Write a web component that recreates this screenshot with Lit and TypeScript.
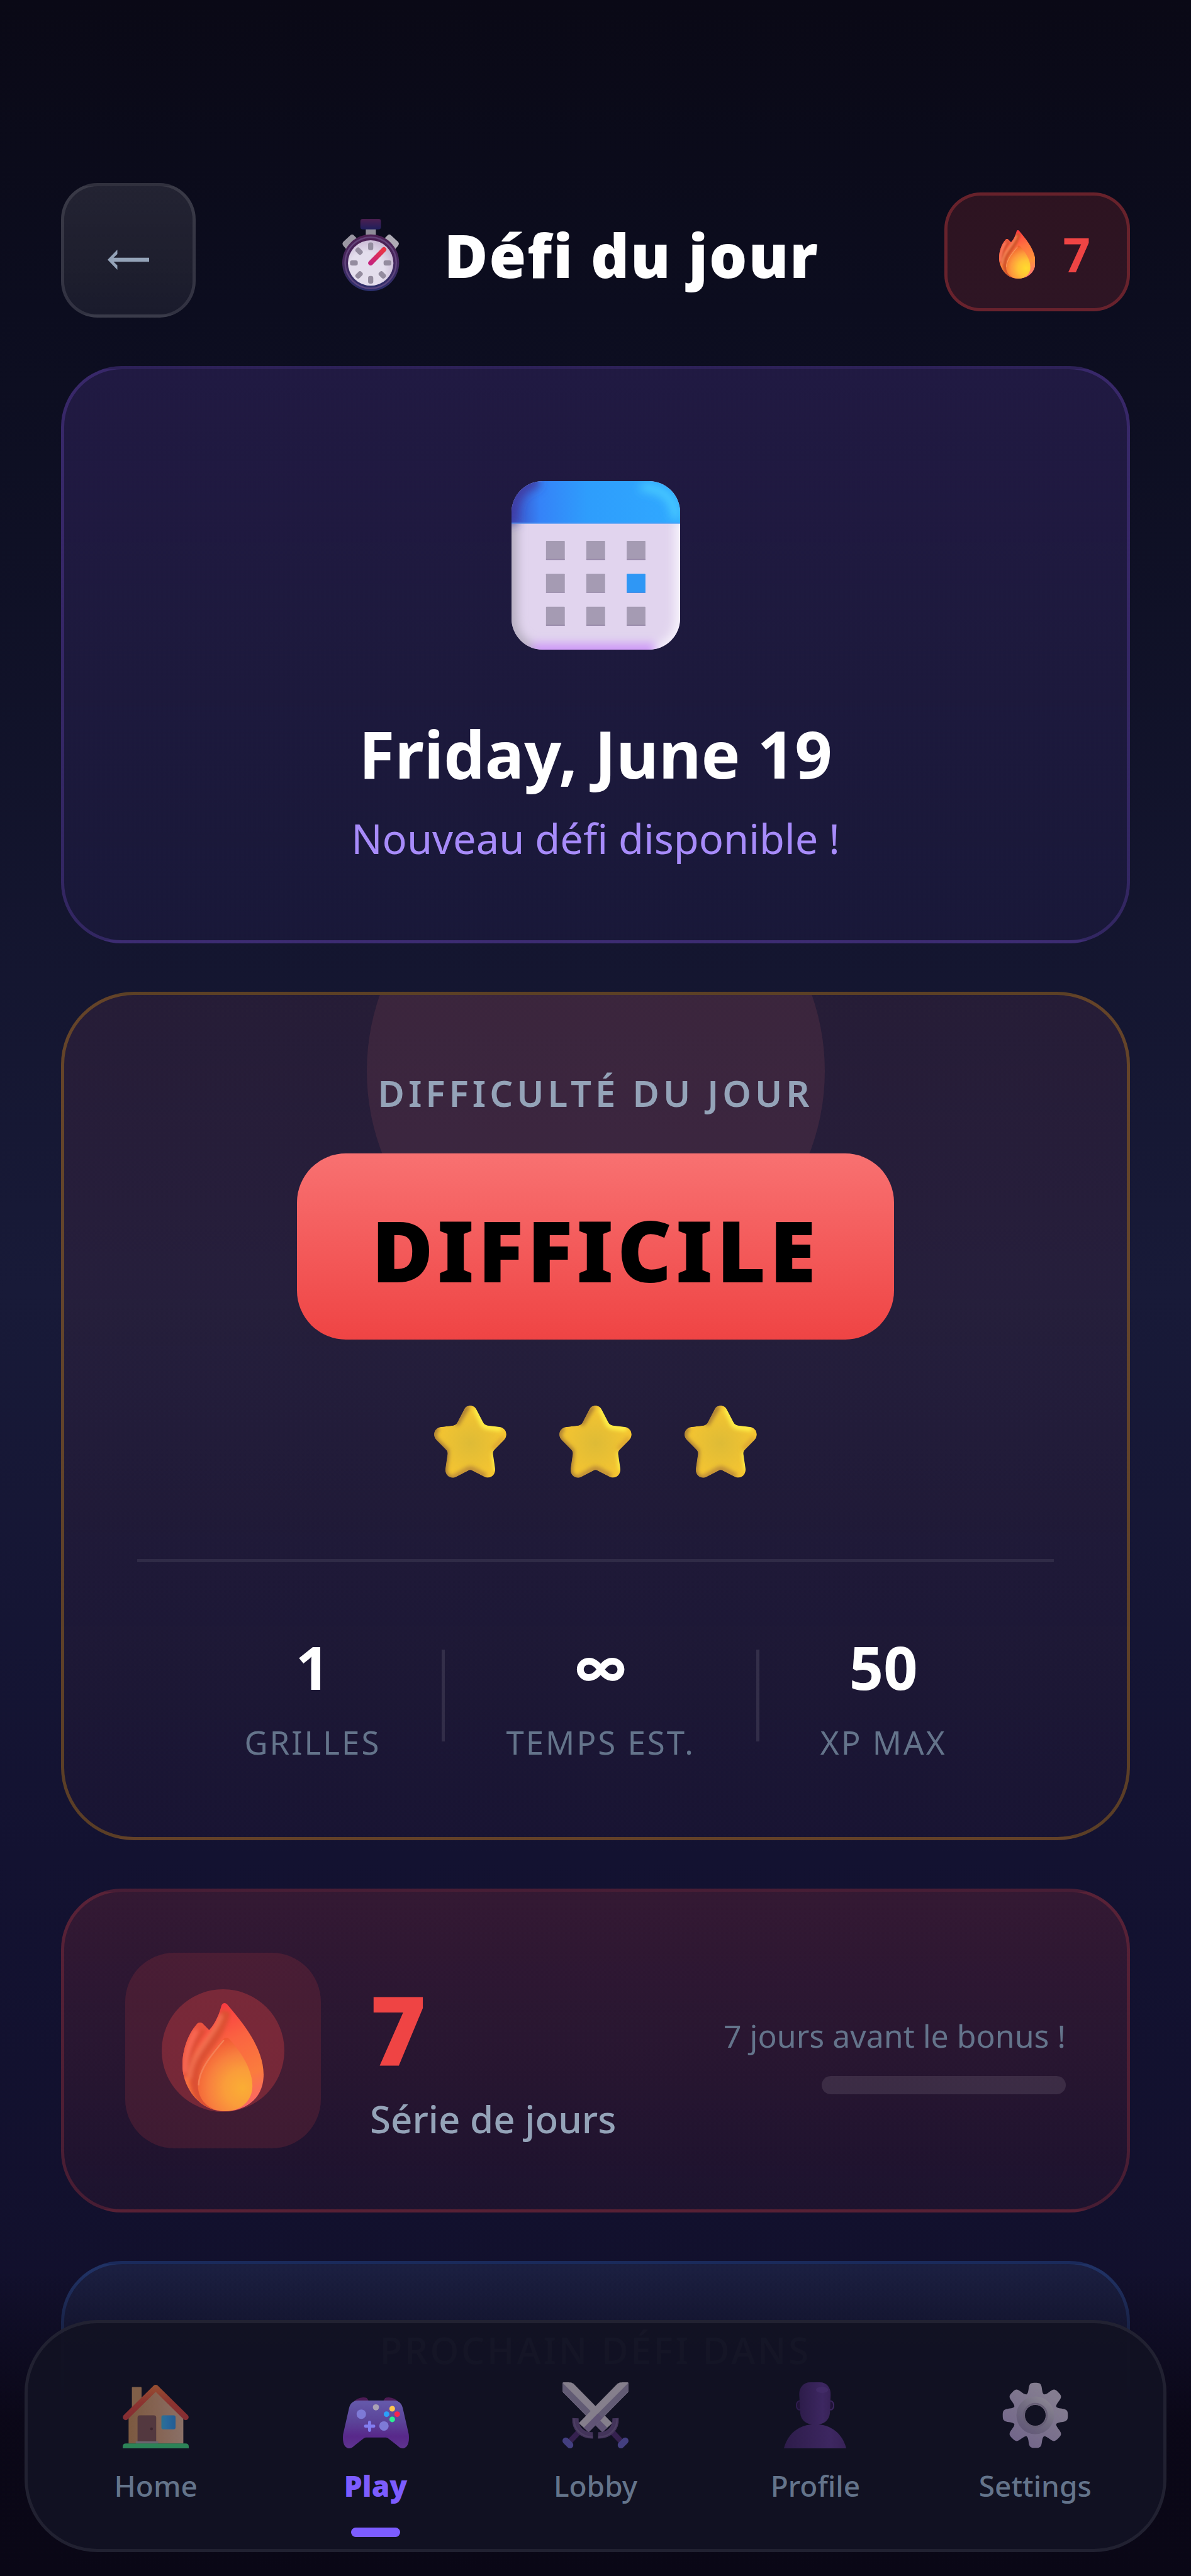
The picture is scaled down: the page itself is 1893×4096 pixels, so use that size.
import { LitElement, html, css, svg } from 'lit';
import { customElement, property, state } from 'lit/decorators.js';
import { classMap } from 'lit/directives/class-map.js';

const starPath =
  'M11.6 1.6C12.4-.5 15.6-.5 16.4 1.6L18.9 6.4C19.3 7.2 19.9 7.6 20.7 7.7L25.4 8.3C28 8.7 28.8 11.6 27 13.4L23.5 16.9C22.9 17.5 22.7 18 22.8 18.9L23.6 24.4C23.9 27 21.6 28.7 19.4 27.5L14.9 25.2C14.3 24.8 13.7 24.8 13.1 25.2L8.6 27.5C6.4 28.7 4.1 27 4.4 24.4L5.2 18.9C5.3 18 5.1 17.5 4.5 16.9L1 13.4C-.8 11.6 0 8.7 2.6 8.3L7.3 7.7C8.1 7.6 8.7 7.2 9.1 6.4Z';

const flamePath =
  'M10.1.6C10.5-.2 11.2-.2 11.8.6C15.5 5 21 11.500 21 18.500C21 25 16 28 10.900 28C4.500 28 0 22 0 16C0 12 1.500 8 3.600 5.600C4.200 4.900 4.900 4.900 5.400 5.500L6.900 7C8.600 5.200 9.600 2.600 10.100.6Z';

const blade = svg`
  <path d="M24.2.1C25 0 27 0 27.600 0Q28 0 28 .5V3.700L27.700 4.300L11.100 21.100L6.900 17.300L23.300.6Z" fill="#857f8c" />
  <path d="M28 .2V3.700L27.600 4.400L11.100 21.100L9 19.300Z" fill="#625b74" />
  <path d="M17 15.200L11.100 21.100L9 19.300L15 13.200Z" fill="#5f5176" opacity=".7" />`;

const hilt = svg`
  <path d="M6.600 21.400L3.200 25" stroke="#35214f" stroke-width="2.400" />
  <path d="M5.500 15.200C5.200 19.400 8.200 22.700 12.900 22.500" stroke="#43345a" stroke-width="2.700" fill="none" />
  <path d="M4.900 15.400C4.700 19.800 8 23.200 12.800 23.200" stroke="#4d3f63" stroke-width=".6" fill="none" />
  <path d="M1.400 24.800L3.200 26.600" stroke="#433f80" stroke-width="2.800" stroke-linecap="round" />`;

// All pictograms share a 28 unit tall box.
const icons: Record<string, { width: number; art: unknown }> = {
  stopwatch: {
    width: 22,
    art: svg`
      <defs>
        <linearGradient id="sw-rim" x1="0" y1="0" x2="0" y2="1">
          <stop offset="0" stop-color="#4c1f52" /><stop offset=".5" stop-color="#44285e" /><stop offset="1" stop-color="#2a2f6c" />
        </linearGradient>
        <linearGradient id="sw-crown" x1="0" y1="0" x2="0" y2="1">
          <stop offset="0" stop-color="#4c1f50" /><stop offset="1" stop-color="#1f1f5c" />
        </linearGradient>
        <radialGradient id="sw-face" cx=".4" cy=".65" r=".65">
          <stop offset=".6" stop-color="#e4deed" /><stop offset="1" stop-color="#cbbcd6" />
        </radialGradient>
        <linearGradient id="sw-hand" x1="0" y1="1" x2="1" y2="0">
          <stop offset="0" stop-color="#c5237d" /><stop offset="1" stop-color="#ea3545" />
        </linearGradient>
      </defs>
      <rect x="9.100" y="3.500" width="3.900" height="4" fill="#8f8c98" />
      <rect x="7" y="0" width="8" height="4.100" rx="1" fill="url(#sw-crown)" />
      <path d="M3.300 6.200Q3.800 5.800 4.300 6.200L6.500 8.400L2 12.300L.4 10.400Q-.2 9.600.4 8.900Z" fill="#9a97a2" />
      <path d="M18.700 6.200Q18.200 5.800 17.700 6.200L15.500 8.400L20 12.300L21.600 10.400Q22.200 9.600 21.600 8.900Z" fill="#aeabb5" />
      <circle cx="11" cy="17" r="11" fill="url(#sw-rim)" />
      <circle cx="11" cy="17" r="9.900" fill="none" stroke="#6d5189" stroke-width=".6" opacity=".7" />
      <circle cx="11" cy="17.100" r="8.800" fill="url(#sw-face)" />
      <g fill="#948c9f">
        <rect x="10" y="9.100" width="2" height="3" rx=".8" />
        <rect x="10" y="22.100" width="2" height="3" rx=".8" />
        <rect x="3" y="16.100" width="3" height="2" rx=".8" />
        <rect x="16" y="16.100" width="3" height="2" rx=".8" />
        <rect x="5" y="11.500" width="3" height="2" rx=".8" transform="rotate(45 6.500 12.500)" />
        <rect x="5" y="20.700" width="3" height="2" rx=".8" transform="rotate(-45 6.500 21.700)" />
        <rect x="14" y="20.700" width="3" height="2" rx=".8" transform="rotate(45 15.500 21.700)" />
      </g>
      <path d="M11 17.100L16.100 11.900" stroke="url(#sw-hand)" stroke-width="1.900" stroke-linecap="round" />`,
  },
  fire: {
    width: 21,
    art: svg`
      <defs>
        <linearGradient id="fl-main" x1=".45" y1="0" x2=".8" y2="1">
          <stop offset="0" stop-color="#ff3340" /><stop offset=".35" stop-color="#ff7140" />
          <stop offset=".7" stop-color="#ff943a" /><stop offset="1" stop-color="#ff6f7c" />
        </linearGradient>
        <radialGradient id="fl-core" gradientUnits="userSpaceOnUse" cx="15.600" cy="22" r="13.500">
          <stop offset="0" stop-color="#ffdb2e" /><stop offset=".35" stop-color="#ffc336" />
          <stop offset=".65" stop-color="#fd9a3c" /><stop offset="1" stop-color="#f2602f" />
        </radialGradient>
        <clipPath id="fl-clip"><path d=${flamePath} /></clipPath>
        <filter id="fl-soft"><feGaussianBlur stdDeviation=".5" /></filter>
      </defs>
      <path d=${flamePath} fill="url(#fl-main)" />
      <g clip-path="url(#fl-clip)" fill="none" filter="url(#fl-soft)">
        <path d="M7.500 5.500C4 10.500 1.500 14 1.200 19L-2 20V3H6Z" fill="#ea5a3c" />
        <path d="M5.500 7C3.500 10 1.600 14 1 19" stroke="#cf4f2b" stroke-width="1" />
        <path d="M3.600 7C1.800 10 .8 13.500.6 18" stroke="#ff7a5c" stroke-width="1.200" />
        <path d="M11.300 2C9 11 3 13 3.200 20C3.500 24 5 26 8 28" stroke="#d4552c" stroke-width="2.600" />
        <path d="M10 3C8.500 8.500 2 13 1.800 19.500" stroke="#f58557" stroke-width="1" />
      </g>
      <path d="M10.500 9.400C11 8.800 11.700 8.800 12.200 9.400C15 12.500 18.100 17 18.100 21.500C18.100 25 15.500 28 11 28C6.800 28 4 25 4 21.300C4 17 7.500 13 10.500 9.400Z" fill="url(#fl-core)" />
      <path d="M10.700 9.600C7.700 13.200 4.200 17.200 4.200 21.300" fill="none" stroke="#f79a5e" stroke-width=".4" />`,
  },
  calendar: {
    width: 28,
    art: svg`
      <defs>
        <clipPath id="cal-clip"><rect width="28" height="28" rx="5.200" /></clipPath>
        <linearGradient id="cal-top">
          <stop offset="0" stop-color="#3b4fc4" /><stop offset=".17" stop-color="#3583f8" />
          <stop offset=".45" stop-color="#2e9dfc" /><stop offset="1" stop-color="#30a9ff" />
        </linearGradient>
        <filter id="cal-soft" x="-30%" y="-30%" width="160%" height="160%"><feGaussianBlur stdDeviation=".8" /></filter>
      </defs>
      <g clip-path="url(#cal-clip)">
        <rect width="28" height="28" fill="#e1d4ee" />
        <g filter="url(#cal-soft)" fill="none">
          <path d="M-.2 6V22.500Q-.2 28 5 28.500" stroke="#b5adc0" stroke-width="2.400" />
          <path d="M28.200 6V22.500Q28.200 28 23 28.500" stroke="#f7f3fc" stroke-width="2.200" />
          <path d="M3.500 28.300H24" stroke="#cd97f8" stroke-width="2.600" />
        </g>
        <rect width="28" height="7.050" fill="url(#cal-top)" />
        <g filter="url(#cal-soft)" fill="none">
          <path d="M0 7V5.500Q0 1 4.500 0" stroke="#3f3aa0" stroke-width="2" />
          <path d="M21.500 1Q27.200 1.200 27.300 6.300" stroke="#4ed2ff" stroke-width="1.200" />
        </g>
        <rect y="6.900" width="28" height=".15" fill="#5b9df2" />
      </g>
      ${[9.93, 15.4, 20.87].map((y, row) =>
        [5.73, 12.42, 19.12].map(
          (x, col) => svg`
            <rect x=${x} y=${y} width="3.120" height="3.150" rx=".1" fill=${row === 1 && col === 2 ? '#2f97f5' : '#a59bb3'} />
            <rect x=${x} y=${y + 3} width="3.120" height=".15" fill=${row === 1 && col === 2 ? '#2a80e6' : '#9486a6'} />`
        )
      )}`,
  },
  star: {
    width: 28,
    art: svg`
      <defs>
        <clipPath id="st-clip"><path d=${starPath} /></clipPath>
        <radialGradient id="st-fill" cx=".5" cy=".52" r=".5">
          <stop offset="0" stop-color="#debb36" /><stop offset="1" stop-color="#f5c531" />
        </radialGradient>
        <filter id="st-soft" x="-30%" y="-30%" width="160%" height="160%"><feGaussianBlur stdDeviation=".8" /></filter>
      </defs>
      <g clip-path="url(#st-clip)">
        <path d=${starPath} fill="url(#st-fill)" />
        <g fill="none" filter="url(#st-soft)" stroke-width="2.200">
          <path d="M13 0L8.400 7.400M1.500 8.500Q-1.500 11 1 13.900L4.700 17.500V19L4 25Q4.300 28 7 28.500" stroke="#a77c34" />
          <path d="M7 28.300L13 24.800Q14 24.300 15 24.800L20 27.500" stroke="#bd8c38" />
          <path d="M27 12.500L22.800 17" stroke="#dca432" stroke-width="1.800" />
          <path d="M16 1L19 7.400Q20 8.300 21 8.300L26 9M23.300 18L24 25" stroke="#fff548" stroke-width="1.900" />
        </g>
      </g>`,
  },
  home: {
    width: 28,
    art: svg`
      <defs>
        <linearGradient id="ho-wall"><stop offset="0" stop-color="#7b5940" /><stop offset=".5" stop-color="#856352" /><stop offset="1" stop-color="#8a7067" /></linearGradient>
        <linearGradient id="ho-roof" gradientUnits="userSpaceOnUse" x1="14" y1="1" x2="14" y2="16">
          <stop offset="0" stop-color="#965031" /><stop offset=".5" stop-color="#8c3430" /><stop offset="1" stop-color="#842c33" />
        </linearGradient>
        <linearGradient id="ho-pane"><stop offset="0" stop-color="#2c7190" /><stop offset=".3" stop-color="#2a6a9c" /><stop offset="1" stop-color="#225c94" /></linearGradient>
      </defs>
      <rect x="3.900" y="2" width="4.100" height="10" rx=".3" fill="#805f48" />
      <path d="M2.500 14L14 3L25.700 14V26H2.500Z" fill="url(#ho-wall)" />
      <path d="M1.300 14.800L14 2.300L26.700 14.800" fill="none" stroke="url(#ho-roof)" stroke-width="2.500" stroke-linecap="round" stroke-linejoin="round" />
      <path d="M6.300 25.500V15Q6.300 14 7.300 14H13.200Q14.200 14 14.200 15V25.500Z" fill="#53383f" />
      <ellipse cx="12.200" cy="19.700" rx=".6" ry=".6" fill="#3e262f" />
      <rect x="5.500" y="25" width="9.600" height="1" rx=".3" fill="#6c6470" />
      <rect x="16.400" y="14" width="6" height="5.900" rx=".8" fill="url(#ho-pane)" />
      <path d="M0 28V27.200Q0 25.900 1.400 25.900H26.600Q28 25.900 28 27.200V28Z" fill="#2c8357" />`,
  },
  play: {
    width: 28,
    art: svg`
      <defs>
        <linearGradient id="gp-body" x1="0" y1="0" x2="0" y2="1">
          <stop offset="0" stop-color="#655aab" /><stop offset=".45" stop-color="#5b4398" />
          <stop offset=".75" stop-color="#58288a" /><stop offset="1" stop-color="#5f3490" />
        </linearGradient>
      </defs>
      <path d="M4.300 8.500Q6 6.500 8.500 6.400Q10 6.300 10.400 7L11 8ZM23.700 8.500Q22 6.500 19.500 6.400Q18 6.300 17.700 7L17 8Z" fill="#4d1b55" />
      <path d="M6.500 7.700H21.500C24 7.700 25 9.200 25.400 11L27.900 22C28.400 26.500 26.800 28 25.200 28C24.300 28 23.700 27.400 22.800 26.600L19.400 23.900C18.900 23.500 18.500 23.400 17.900 23.400H10.100C9.500 23.400 9.100 23.500 8.600 23.900L5.200 26.600C4.300 27.400 3.700 28 2.800 28C1.200 28-.4 26.500.1 22L2.600 11C3 9.200 4 7.700 6.500 7.700Z" fill="url(#gp-body)" />
      <circle cx="14" cy="10.600" r="1.300" fill="#aaa2b5" />
      <circle cx="7.800" cy="13.500" r="2" fill="#7e7ad6" />
      <circle cx="17.400" cy="18.500" r="2" fill="#7e7ad6" />
      <path d="M11.300 16.900V20.400M9.600 18.600H13.100" stroke="#827df0" stroke-width="1.300" stroke-linecap="round" />
      <circle cx="20.900" cy="11.200" r="1.200" fill="#ffc74f" />
      <circle cx="18.500" cy="13.500" r="1.200" fill="#2ba0f8" />
      <circle cx="23" cy="13.500" r="1.200" fill="#f9244f" />
      <circle cx="20.900" cy="15.700" r="1.200" fill="#2bee93" />`,
  },
  lobby: {
    width: 28,
    art: svg`
      <g transform="matrix(-1 0 0 1 28 0)">${blade}${hilt}</g>
      ${blade}${hilt}`,
  },
  profile: {
    width: 28,
    art: svg`
      <defs>
        <linearGradient id="pf-fill"><stop offset="0" stop-color="#2d1c4a" /><stop offset=".75" stop-color="#3d2761" /><stop offset="1" stop-color="#372257" /></linearGradient>
      </defs>
      <ellipse cx="7.300" cy="9.800" rx="1.200" ry="1.900" fill="#201337" stroke="#301d50" stroke-width=".5" />
      <ellipse cx="20.700" cy="9.800" rx="1.200" ry="1.900" fill="#201337" stroke="#3d2761" stroke-width=".5" />
      <path d="M.8 28C2.300 22 7 17.800 14 17.800S25.700 22 27.200 28Z" fill="url(#pf-fill)" />
      <path d="M12 0H16C19 0 20.700 2.300 20.600 5.300L20.300 13C20 16.200 17.600 18 14 18S8 16.200 7.700 13L7.300 5.300C7.200 2.300 9 0 12 0Z" fill="url(#pf-fill)" />
      <ellipse cx="17" cy="3.200" rx="2.600" ry="1.300" fill="#442e6b" opacity=".7" />`,
  },
  settings: {
    width: 28,
    art: svg`
      <defs>
        <linearGradient id="ge-fill" gradientUnits="userSpaceOnUse" x1="20" y1="5" x2="6" y2="24">
          <stop offset="0" stop-color="#847d90" /><stop offset="1" stop-color="#73678a" />
        </linearGradient>
        <linearGradient id="ge-ring" gradientUnits="userSpaceOnUse" x1="19" y1="7" x2="9" y2="21">
          <stop offset="0" stop-color="#8a8593" /><stop offset=".5" stop-color="#706a80" /><stop offset="1" stop-color="#625877" />
        </linearGradient>
        <clipPath id="ge-teeth">
          ${[0, 45, 90, 135, 180, 225, 270, 315].map(
            a => svg`<path transform="rotate(${a} 14 14)" d="M10 7.500C9.500 5.800 9.800 5.600 10.300 5.200C11.300 4.300 11 2.500 11.500 1.300C11.900.4 12.400.2 14 .2S16.100.4 16.500 1.300C17 2.500 16.700 4.300 17.700 5.200C18.200 5.600 18.500 5.800 18 7.500Z" />`
          )}
        </clipPath>
      </defs>
      <rect width="28" height="28" fill="url(#ge-fill)" clip-path="url(#ge-teeth)" />
      <circle cx="14" cy="14" r="7" fill="none" stroke="url(#ge-fill)" stroke-width="5" />
      <circle cx="14" cy="14" r="6.200" fill="none" stroke="url(#ge-ring)" stroke-width="3.600" />
      <circle cx="14" cy="14" r="4.900" fill="none" stroke="#675f76" stroke-width=".7" />`,
  },
};

@customElement('emoji-icon')
export class EmojiIcon extends LitElement {
  @property() name = 'star';

  static styles = css`
    :host {
      display: block;
    }

    svg {
      display: block;
      height: 100%;
      margin: 0 auto;
    }
  `;

  render() {
    const icon = icons[this.name];
    return html`<svg viewBox="0 0 ${icon.width} 28" aria-hidden="true">${icon.art}</svg>`;
  }
}

@customElement('nav-bar')
export class NavBar extends LitElement {
  @state() private active = 'play';

  private items = [
    { id: 'home', label: 'Home' },
    { id: 'play', label: 'Play' },
    { id: 'lobby', label: 'Lobby' },
    { id: 'profile', label: 'Profile' },
    { id: 'settings', label: 'Settings' },
  ];

  static styles = css`
    :host {
      display: block;
    }

    .bar {
      display: grid;
      grid-template-columns: repeat(5, 1fr);
      padding: 94px 29px 19px;
      background: rgba(18, 18, 35, 0.95);
      border: 5px solid rgba(255, 255, 255, 0.07);
      border-radius: 116px;
    }

    .item {
      display: flex;
      flex-direction: column;
      align-items: center;
      color: #64748b;
      font-size: 46px;
      line-height: 66px;
      font-weight: 500;
      text-decoration: none;
    }

    .item emoji-icon {
      height: 105px;
      margin-bottom: 26px;
    }

    .item::after {
      content: '';
      width: 78px;
      height: 15px;
      margin-top: 34px;
      border-radius: 8px;
    }

    .active {
      color: #7c5cff;
      font-weight: 900;
    }

    .active::after {
      background: #7c5cff;
    }
  `;

  render() {
    return html`
      <nav class="bar">
        ${this.items.map(
          item => html`
            <a
              class=${classMap({ item: true, active: item.id === this.active })}
              href="#${item.id}"
              @click=${() => (this.active = item.id)}
            >
              <emoji-icon name=${item.id}></emoji-icon>
              ${item.label}
            </a>
          `
        )}
      </nav>
    `;
  }
}

@customElement('app-root')
export class AppRoot extends LitElement {
  @property({ type: Number }) streak = 7;

  @property({ type: Number }) progress = 0;

  private stats = [
    { value: '1', label: 'GRILLES' },
    { value: '∞', label: 'TEMPS EST.' },
    { value: '50', label: 'XP MAX' },
  ];

  static styles = css`
    :host {
      display: block;
      position: relative;
      height: 100vh;
      overflow: hidden;
      box-sizing: border-box;
      color: #fff;
      font-family: 'Noto Sans', 'Open Sans', sans-serif;
      background: linear-gradient(180deg, #0a0916 0%, #0c0d1f 12%, #181a38 50%, #131231 72%, #110f2a 100%);
    }

    *,
    *::before,
    *::after {
      box-sizing: border-box;
    }

    h1,
    h2,
    p {
      margin: 0;
    }

    .page {
      display: flex;
      flex-direction: column;
      gap: 77px;
      padding: 291px 97px 500px;
    }

    .header {
      display: flex;
      align-items: center;
      justify-content: space-between;
    }

    .back {
      width: 214px;
      height: 214px;
      padding: 30px 0 0;
      border: 5px solid rgba(255, 255, 255, 0.1);
      border-radius: 58px;
      background: linear-gradient(180deg, rgba(255, 255, 255, 0.1), rgba(255, 255, 255, 0.06));
      color: #94a3b8;
    }

    .back svg {
      display: block;
      width: 66px;
      margin: 0 auto;
      fill: currentColor;
    }

    .title {
      display: flex;
      align-items: center;
      gap: 36px;
      padding-top: 14px;
      font-size: 95px;
      line-height: 128px;
      font-weight: 900;
      letter-spacing: 2px;
    }

    .title emoji-icon {
      width: 160px;
      height: 115px;
    }

    .badge {
      display: flex;
      align-items: center;
      gap: 20px;
      height: 189px;
      margin-top: 4px;
      padding: 8px 58px 0;
      border: 5px solid rgba(239, 68, 68, 0.3);
      border-radius: 58px;
      background: rgba(239, 68, 68, 0.15);
      color: #ef4444;
      font-size: 76px;
      line-height: 104px;
      font-weight: 700;
    }

    .badge emoji-icon {
      width: 106px;
      height: 77px;
    }

    .card {
      border: 5px solid;
      border-radius: 97px;
    }

    .date {
      display: flex;
      flex-direction: column;
      align-items: center;
      padding: 178px 97px 118px;
      border-color: rgba(139, 92, 246, 0.22);
      background: linear-gradient(180deg, rgba(139, 92, 246, 0.16), rgba(139, 92, 246, 0.05));
    }

    .date emoji-icon {
      height: 268px;
      margin-bottom: 95px;
    }

    .day {
      font-size: 104px;
      line-height: 140px;
      font-weight: 700;
    }

    .note {
      margin-top: 21px;
      color: #a78bfa;
      font-size: 65px;
      line-height: 88px;
    }

    .difficulty {
      position: relative;
      display: flex;
      flex-direction: column;
      align-items: center;
      overflow: hidden;
      padding: 116px;
      border-color: rgba(245, 158, 11, 0.3);
      border-radius: 116px;
      background: linear-gradient(180deg, rgba(202, 92, 109, 0.1), rgba(202, 92, 109, 0.03));
    }

    .difficulty > * {
      position: relative;
    }

    .difficulty::before {
      content: '';
      position: absolute;
      top: -243px;
      left: 50%;
      width: 728px;
      height: 728px;
      border-radius: 50%;
      background: rgba(248, 113, 113, 0.1);
      transform: translateX(-50%);
    }

    .caption {
      color: #94a3b8;
      font-size: 58px;
      line-height: 80px;
      font-weight: 600;
      letter-spacing: 6px;
    }

    .level {
      margin-top: 56px;
      padding: 63px 118px 53px;
      border-radius: 78px;
      background: linear-gradient(180deg, #f87171, #ef4444);
      color: #000;
      font-size: 134px;
      line-height: 180px;
      font-weight: 900;
      letter-spacing: 6px;
    }

    .stars {
      display: flex;
      gap: 84px;
      margin-top: 105px;
    }

    .stars emoji-icon {
      width: 115px;
      height: 115px;
    }

    .stats {
      display: flex;
      align-items: center;
      justify-content: center;
      align-self: stretch;
      gap: 97px;
      margin-top: 129px;
      padding-top: 102px;
      border-top: 5px solid rgba(255, 255, 255, 0.08);
    }

    .stat {
      display: flex;
      flex-direction: column;
      align-items: center;
      gap: 21px;
    }

    .value {
      font-size: 95px;
      line-height: 128px;
      font-weight: 700;
    }

    .symbol {
      font-family: 'Inter', sans-serif;
      font-size: 84px;
    }

    .label {
      color: #64748b;
      font-size: 51px;
      line-height: 70px;
      letter-spacing: 3px;
    }

    .rule {
      width: 5px;
      height: 146px;
      background: rgba(255, 255, 255, 0.1);
    }

    .streak {
      display: flex;
      align-items: center;
      gap: 78px;
      padding: 97px;
      border-color: rgba(239, 68, 68, 0.2);
      background: linear-gradient(180deg, rgba(239, 68, 68, 0.15), rgba(239, 68, 68, 0.05));
    }

    .tile {
      position: relative;
      display: grid;
      place-items: center;
      width: 311px;
      height: 311px;
      padding-top: 20px;
      border-radius: 78px;
      background: rgba(239, 68, 68, 0.14);
    }

    .tile emoji-icon {
      height: 172px;
    }

    /* the glow tints the flame as well as the tile */
    .tile::after {
      content: '';
      position: absolute;
      inset: 58px;
      border-radius: 50%;
      background: rgba(239, 68, 68, 0.3);
    }

    .count {
      flex: 1;
      padding-top: 16px;
    }

    .days {
      color: #ef4444;
      font-size: 152px;
      line-height: 200px;
      font-weight: 900;
    }

    .unit {
      color: #94a3b8;
      font-size: 60px;
      line-height: 84px;
      font-weight: 500;
    }

    .bonus {
      display: flex;
      flex-direction: column;
      align-items: flex-end;
      gap: 29px;
      padding-top: 10px;
      color: #64748b;
      font-size: 50px;
      line-height: 70px;
    }

    .track {
      width: 388px;
      height: 29px;
      overflow: hidden;
      border-radius: 15px;
      background: rgba(255, 255, 255, 0.1);
    }

    .fill {
      height: 100%;
      background: #ef4444;
    }

    .next {
      display: flex;
      flex-direction: column;
      align-items: center;
      min-height: 560px;
      padding: 97px;
      border-color: rgba(59, 130, 246, 0.2);
      background: linear-gradient(180deg, rgba(99, 150, 220, 0.11), rgba(59, 130, 246, 0.04));
    }

    .next .caption {
      font-weight: 500;
      letter-spacing: 4px;
    }

    .dock {
      position: absolute;
      inset: auto 0 0;
      padding: 78px 39px 38px;
      background: linear-gradient(180deg, rgba(10, 7, 22, 0), rgba(10, 7, 22, 0.94) 50%, #0a0716);
    }
  `;

  render() {
    return html`
      <main class="page">
        <header class="header">
          <button class="back" aria-label="Retour">
            <svg viewBox="0 0 66 32" aria-hidden="true">
              <path d="M0 16L15.500 0V7L9.500 12.700H66V19.300H9.500L15.500 25V32Z" />
            </svg>
          </button>
          <h1 class="title"><emoji-icon name="stopwatch"></emoji-icon>Défi du jour</h1>
          <div class="badge"><emoji-icon name="fire"></emoji-icon>${this.streak}</div>
        </header>

        <section class="card date">
          <emoji-icon name="calendar"></emoji-icon>
          <h2 class="day">Friday, June 19</h2>
          <p class="note">Nouveau défi disponible !</p>
        </section>

        <section class="card difficulty">
          <p class="caption">DIFFICULTÉ DU JOUR</p>
          <div class="level">DIFFICILE</div>
          <div class="stars">${[1, 2, 3].map(() => html`<emoji-icon name="star"></emoji-icon>`)}</div>
          <div class="stats">
            ${this.stats.map(
              (stat, i) => html`
                ${i ? html`<div class="rule"></div>` : ''}
                <div class="stat">
                  <span class=${classMap({ value: true, symbol: stat.value === '∞' })}>${stat.value}</span>
                  <span class="label">${stat.label}</span>
                </div>
              `
            )}
          </div>
        </section>

        <section class="card streak">
          <div class="tile"><emoji-icon name="fire"></emoji-icon></div>
          <div class="count">
            <div class="days">${this.streak}</div>
            <div class="unit">Série de jours</div>
          </div>
          <div class="bonus">
            <span>7 jours avant le bonus !</span>
            <div class="track" role="progressbar" aria-valuenow=${this.progress} aria-label="Bonus">
              <div class="fill" style="width: ${this.progress}%"></div>
            </div>
          </div>
        </section>

        <section class="card next">
          <p class="caption">PROCHAIN DÉFI DANS</p>
        </section>
      </main>

      <div class="dock"><nav-bar></nav-bar></div>
    `;
  }
}
